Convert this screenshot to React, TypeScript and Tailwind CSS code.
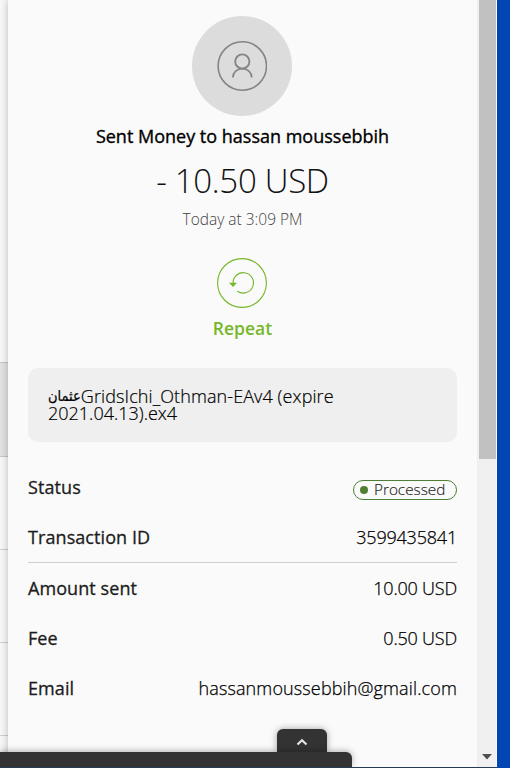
import clsx from 'clsx';

type Detail = {
	label: string;
	value: string;
	numeric?: boolean;
};

const DETAILS: Detail[] = [
	{ label: 'Amount sent', value: '10.00 USD', numeric: true },
	{ label: 'Fee', value: '0.50 USD', numeric: true },
	{ label: 'Email', value: 'hassanmoussebbih@gmail.com' },
];

function Avatar() {
	return (
		<div className="flex h-[100px] w-[100px] shrink-0 items-center justify-center rounded-full bg-[#dcdcdc]">
			<svg width="50" height="50" viewBox="0 0 50 50" fill="none" stroke="#858585">
				<circle cx="25.3" cy="25" r="24.2" strokeWidth="1.6" />
				<circle cx="25.3" cy="20.5" r="7.1" strokeWidth="1.9" />
				<path d="M15.9 36.5a9.4 8.9 0 0 1 18.8 0" strokeWidth="1.7" />
			</svg>
		</div>
	);
}

function RepeatButton() {
	return (
		<button className="flex flex-col items-center text-[#76b72a]">
			<svg width="50" height="50" viewBox="0 0 50 50" fill="none" stroke="currentColor">
				<circle cx="25" cy="25" r="24.4" strokeWidth="1.1" />
				<path d="M16.2 26.5A10.2 10.2 0 1 1 20.4 33.2" strokeWidth="1.1" />
				<path d="M12 24.8h8l-4 4.2z" fill="currentColor" stroke="none" />
			</svg>
			<span className="mt-[8px] ml-px text-[17.5px] leading-6 font-semibold">Repeat</span>
		</button>
	);
}

function DetailRow({ label, value, numeric }: Detail) {
	return (
		<div className="flex h-[50px] items-center justify-between text-[18px] whitespace-nowrap">
			<span className="tracking-[0.08px] text-[#1c1c1c] [-webkit-text-stroke:0.3px_#1c1c1c]">{label}</span>
			<span
				className={clsx(
					'font-light text-black [-webkit-text-stroke:0.25px_#000]',
					numeric ? 'tracking-[-0.2px]' : 'tracking-[0.13px]'
				)}
			>
				{value}
			</span>
		</div>
	);
}

function PageBehind() {
	return (
		<div className="h-full w-2 shrink-0 bg-[#f8f8f8]">
			<div className="h-[362px]" />
			<div className="h-[95px] border-y border-[#c4c4c4] bg-[#e2e2e2]" />
			<div className="h-[93px] border-b border-[#cfcfcf]" />
			<div className="h-[93px] border-b border-[#cfcfcf]" />
			<div className="h-[93px] border-b border-[#cfcfcf]" />
		</div>
	);
}

function Scrollbar() {
	return (
		<div className="relative flex h-full w-5 shrink-0 flex-col items-end justify-between border-r border-[#fafafa] bg-[#f0f0f0]">
			<div className="h-[459px] w-[17px] bg-[#c1c1c1]" />
			<svg className="mr-[4px] mb-[8px]" width="10" height="6" viewBox="0 0 10 6">
				<path d="M0 0h10L5 5.5z" fill="#505050" />
			</svg>
		</div>
	);
}

function BottomDock() {
	return (
		<div className="absolute bottom-px left-0 w-[352px]">
			<div className="ml-[277px] flex h-[23px] w-[50px] items-center justify-center rounded-t-md bg-[#333] shadow-[0_0_7px_rgba(0,0,0,0.35)]">
				<svg className="mt-0.5" width="12" height="8" viewBox="0 0 12 8" fill="none" stroke="#e4e4e4" strokeWidth="2.2">
					<path d="M1.5 6.5L6 2.2l4.5 4.3" />
				</svg>
			</div>
			<div className="relative h-[15px] rounded-tr-md bg-[#333] shadow-[0_-1px_6px_rgba(0,0,0,0.3)]" />
		</div>
	);
}

export default function App() {
	return (
		<div className="relative flex h-[768px] w-[510px] overflow-hidden bg-[#0245b4] font-['Open_Sans','Noto_Sans','DejaVu_Sans',sans-serif]">
			<PageBehind />
			<main className="relative flex w-[469px] shrink-0 flex-col bg-[#fafafa] px-5 pt-4 shadow-[0_0_8px_rgba(0,0,0,0.25)]">
				<section className="mr-px flex flex-col items-center whitespace-nowrap">
					<Avatar />
					<h1 className="mt-2 ml-px text-[18px] leading-6 text-black [-webkit-text-stroke:0.35px_#000]">
						Sent Money to hassan moussebbih
					</h1>
					<p className="mt-3 ml-px text-[33px] leading-[42px] font-light tracking-[-0.3px] text-[#111]">
						- 10.50 USD
					</p>
					<p className="mt-[7px] mb-[29px] ml-px text-[15.5px] leading-5 font-light text-[#444]">
						Today at 3:09 PM
					</p>
					<RepeatButton />
				</section>
				<div className="mt-7 flex h-[74px] shrink-0 flex-col rounded-[10px] bg-[#efefef] px-5 pt-5 text-[18px] font-light text-black [-webkit-text-stroke:0.2px_#000]">
					<div className="flex h-[17px] items-center leading-[17px] whitespace-nowrap">
						<span className="font-['DejaVu_Sans_Condensed','DejaVu_Sans'] text-[14.5px] leading-[17px]">عثمان</span>
						<span className="tracking-[0.1px]">GridsIchi_Othman-EAv4 (expire</span>
					</div>
					<div className="h-[17px] leading-[17px]">2021.04.13).ex4</div>
				</div>
				<section className="mt-5">
					<div className="flex h-[50px] items-center justify-between text-[18px]">
						<span className="tracking-[0.08px] text-[#1c1c1c] [-webkit-text-stroke:0.3px_#1c1c1c]">Status</span>
						<span className="mt-[5px] flex h-5 w-[104px] items-center rounded-full border border-[#4f7f35] pl-1.5 text-[15.3px] font-light text-[#222] [-webkit-text-stroke:0.15px_#222]">
							<i className="mr-[6px] h-2 w-2 rounded-full bg-[#4f7f35]" />
							Processed
						</span>
					</div>
					<DetailRow label="Transaction ID" value="3599435841" numeric />
					<div className="border-t border-[#cfcfcf]" />
					{DETAILS.map((d) => (
						<DetailRow key={d.label} {...d} />
					))}
				</section>
			</main>
			<Scrollbar />
			<BottomDock />
			<div className="absolute bottom-0 left-0 h-px w-[497px] bg-[#263c50]" />
		</div>
	);
}
